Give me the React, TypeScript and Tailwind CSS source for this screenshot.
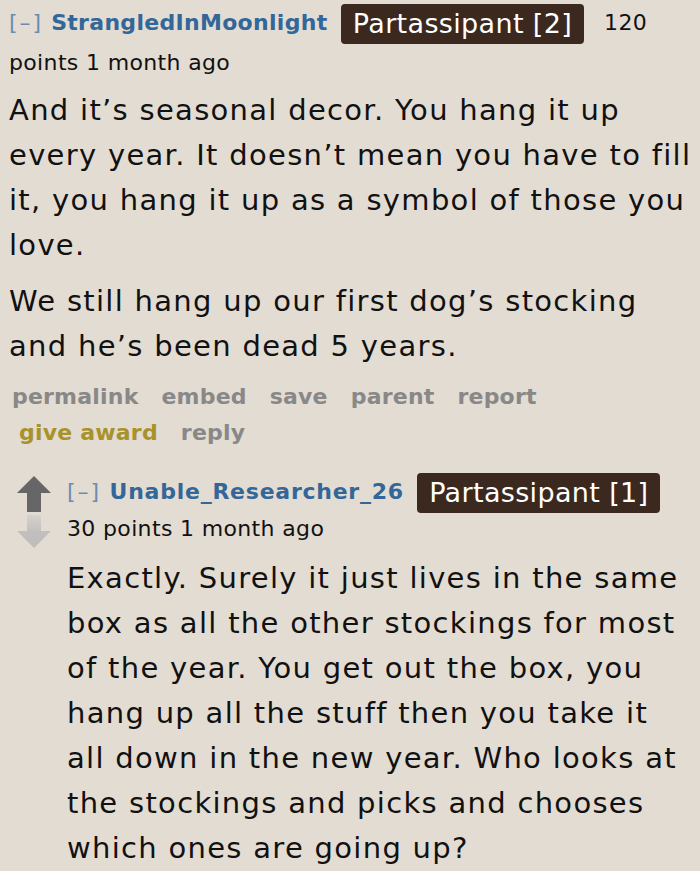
import React from 'react'

const font = { fontFamily: '"DejaVu Sans", Verdana, sans-serif' }

const Badge = ({ children }: { children: React.ReactNode }) => (
	<span className="inline-block ml-[6px] bg-[#3b2920] text-white text-[27px] leading-[40px] px-[12px] rounded-[4px] align-middle">{children}</span>
)

const Arrows = () => (
	<div className="flex flex-col items-center w-[34px] pt-[3px] gap-[3px]">
		<svg width="34" height="36" viewBox="0 0 34 36">
			<path d="M17 0L34 17H24V36H10V17H0Z" fill="#666" />
		</svg>
		<svg width="34" height="33" viewBox="0 0 34 33">
			<defs>
				<linearGradient id="down" x1="0" y1="0" x2="0" y2="1">
					<stop offset="0%" stopColor="#d6d2cd" />
					<stop offset="50%" stopColor="#c2c0be" />
					<stop offset="100%" stopColor="#bdbcbb" />
				</linearGradient>
			</defs>
			<path d="M10 0H24V16H34L17 33L0 16H10Z" fill="url(#down)" />
		</svg>
	</div>
)

const Author = ({ name, wide }: { name: string; wide?: boolean }) => (
	<span className={wide ? 'font-bold text-[#336699] tracking-[0.75px]' : 'font-bold text-[#336699] tracking-[0.3px]'}>
		<span className="font-normal text-[#6a8cb3] tracking-[2px]">[–]</span> {name}
	</span>
)

export default function App() {
	return (
		<div className="min-h-screen w-[700px] bg-[#e3dcd3] text-[#111]" style={font}>
			<div className="pl-[9px] pr-[6px] pt-[4px]">
				<div className="text-[22px] leading-[38px] tracking-[0.35px]">
					<Author name="StrangledInMoonlight" />{' '}
					<Badge>Partassipant [2]</Badge>
					<span className="ml-[20px]">120 points 1 month ago</span>
				</div>
				<div className="text-[29px] tracking-[1.3px] leading-[45px] mt-[6px]">
					<p>And it’s seasonal decor. You hang it up every year. It doesn’t mean you have to fill it, you hang it up as a symbol of those you love.</p>
					<p className="mt-[11px]">We still hang up our first dog’s stocking and he’s been dead 5 years.</p>
				</div>
				<div className="mt-[10px] text-[22px] font-bold text-[#888] leading-[36px] tracking-[0.2px]">
					<div className="flex gap-[23px] pl-[3px]">
						<span>permalink</span><span>embed</span><span>save</span><span>parent</span><span>report</span>
					</div>
					<div className="flex gap-[23px] pl-[10px]">
						<span className="text-[#a8922a]">give award</span><span>reply</span>
					</div>
				</div>
			</div>
			<div className="flex pl-[17px] mt-[22px]">
				<Arrows />
				<div className="pl-[16px] pr-[6px] flex-1">
					<div className="text-[22px] leading-[38px] tracking-[0.35px]">
						<Author name="Unable_Researcher_26" wide />{' '}
						<Badge>Partassipant [1]</Badge>
					</div>
					<div className="text-[22px] leading-[32px] tracking-[0.35px]">30 points 1 month ago</div>
					<p className="text-[29px] tracking-[1.3px] leading-[45px] mt-[11px]">Exactly. Surely it just lives in the same box as all the other stockings for most of the year. You get out the box, you hang up all the stuff then you take it all down in the new year. Who looks at the stockings and picks and chooses which ones are going up?</p>
				</div>
			</div>
		</div>
	)
}
